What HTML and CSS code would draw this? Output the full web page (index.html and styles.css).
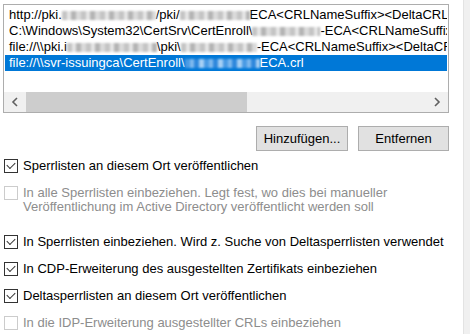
FILE: index.html
```html
<!DOCTYPE html>
<html lang="de">
<head>
    <meta charset="UTF-8">
    <title>Erweiterungen</title>
    <link rel="stylesheet" href="styles.css">
</head>
<body>
    <div class="page">
        <div class="content">
            <!-- Liste der Sperrlisten-Verteilungspunkte -->
            <div class="listbox">
                <ul class="items">
                    <li>http://pki.<span class="mosaic w94"></span>/pki/<span class="mosaic w70"></span>ECA&lt;CRLNameSuffix&gt;&lt;DeltaCRLAllowed&gt;.crl</li>
                    <li>C:\Windows\System32\CertSrv\CertEnroll\<span class="mosaic w68"></span>-ECA&lt;CRLNameSuffix&gt;&lt;DeltaCRLAllowed&gt;.crl</li>
                    <li>file://\\pki.i<span class="mosaic w90"></span>\pki\<span class="mosaic w76"></span>-ECA&lt;CRLNameSuffix&gt;&lt;DeltaCRLAllowed&gt;.crl</li>
                    <li class="selected">file://\\svr-issuingca\CertEnroll\<span class="mosaic w75"></span>ECA.crl</li>
                </ul>
                <div class="hscroll">
                    <span class="arrow">
                        <svg width="8" height="10" viewBox="0 0 8 10"><path d="M6 1 L2 5 L6 9" fill="none" stroke="#606060" stroke-width="1.6"/></svg>
                    </span>
                    <div class="track"><div class="thumb"></div></div>
                    <span class="arrow">
                        <svg width="8" height="10" viewBox="0 0 8 10"><path d="M2 1 L6 5 L2 9" fill="none" stroke="#606060" stroke-width="1.6"/></svg>
                    </span>
                </div>
            </div>

            <div class="buttons">
                <button class="btn btn-add">Hinzufügen...</button>
                <button class="btn btn-remove">Entfernen</button>
            </div>

            <!-- Optionen -->
            <div class="options">
                <label class="opt">
                    <span class="box checked"></span>
                    <span class="text">Sperrlisten an diesem Ort veröffentlichen</span>
                </label>
                <label class="opt disabled two-lines">
                    <span class="box"></span>
                    <span class="text">In alle Sperrlisten einbeziehen. Legt fest, wo dies bei manueller<br>Veröffentlichung im Active Directory veröffentlicht werden soll</span>
                </label>
                <label class="opt">
                    <span class="box checked"></span>
                    <span class="text">In Sperrlisten einbeziehen. Wird z. Suche von Deltasperrlisten verwendet</span>
                </label>
                <label class="opt">
                    <span class="box checked"></span>
                    <span class="text">In CDP-Erweiterung des ausgestellten Zertifikats einbeziehen</span>
                </label>
                <label class="opt">
                    <span class="box checked"></span>
                    <span class="text">Deltasperrlisten an diesem Ort veröffentlichen</span>
                </label>
                <label class="opt disabled">
                    <span class="box"></span>
                    <span class="text">In die IDP-Erweiterung ausgestellter CRLs einbeziehen</span>
                </label>
            </div>
        </div>
        <div class="side"></div>
    </div>
</body>
</html>
```
FILE: styles.css
```css
body {
    margin: 0;
    font-family: "Liberation Sans", Arial, sans-serif;
    font-size: 13px;
    color: #000;
    background: #fff;
    overflow: hidden;
}

.page {
    display: flex;
    height: 334px;
}

.content {
    width: 446px;
    padding: 4px 0 0 3px;
}

.side {
    margin-left: 14px;
    flex: 1;
    background: #f0f0f0;
    border-left: 1px solid #e3e3e3;
}

/* Listenfeld */
.listbox {
    border: 1px solid #adadad;
    height: 107px;
    display: flex;
    flex-direction: column;
    overflow: hidden;
}

.items {
    list-style: none;
    margin: 0;
    padding: 2px 1px 0 1px;
    flex: 1;
}

.items li {
    height: 16px;
    line-height: 16px;
    padding-left: 4px;
    white-space: nowrap;
    overflow: hidden;
}

.items li.selected {
    background: #0078d7;
    color: #fff;
}

/* verpixelte (unkenntlich gemachte) Stellen */
.mosaic {
    display: inline-block;
    height: 9px;
    margin-top: 4px;
    vertical-align: top;
    background:
        repeating-linear-gradient(90deg, #c4c4c4 0 5px, #e6e6e6 5px 9px, #b4b4b4 9px 14px, #dadada 14px 19px),
        #d0d0d0;
    filter: blur(0.8px);
}

.selected .mosaic {
    background:
        repeating-linear-gradient(90deg, #4a9be4 0 5px, #7fb9ee 5px 9px, #2f88dc 9px 14px, #a6cff4 14px 19px),
        #5aa3e6;
}

.w68 { width: 68px; }
.w70 { width: 70px; }
.w75 { width: 75px; }
.w76 { width: 76px; }
.w90 { width: 90px; }
.w94 { width: 94px; }

.hscroll {
    height: 20px;
    display: flex;
    align-items: center;
    background: #f0f0f0;
}

.arrow {
    width: 22px;
    height: 20px;
    display: flex;
    align-items: center;
    justify-content: center;
}

.track {
    flex: 1;
    height: 20px;
}

.thumb {
    width: 221px;
    height: 20px;
    background: #cdcdcd;
}

/* Schaltflächen */
.buttons {
    display: flex;
    justify-content: flex-end;
    gap: 10px;
    margin-top: 13px;
}

.btn {
    height: 25px;
    background: #e1e1e1;
    border: 1px solid #adadad;
    font-family: inherit;
    font-size: 13px;
    color: #000;
    padding: 0;
}

.btn-add {
    width: 92px;
}

.btn-remove {
    width: 91px;
}

/* Kontrollkästchen */
.options {
    margin-top: 8px;
}

.opt {
    display: flex;
    align-items: flex-start;
    gap: 5px;
    padding-left: 1px;
    line-height: 14px;
    margin-bottom: 13px;
}

.opt.two-lines {
    margin-bottom: 21px;
}

.box {
    width: 12px;
    height: 12px;
    border: 1px solid #333;
    background: #fff;
    position: relative;
    flex: none;
}

.box.checked::after {
    content: "";
    position: absolute;
    left: 2px;
    top: 1px;
    width: 7px;
    height: 4px;
    border-left: 1.5px solid #333;
    border-bottom: 1.5px solid #333;
    transform: translate(0, 1px) rotate(-45deg);
    transform-origin: center;
}

.opt.disabled .box {
    border-color: #cccccc;
}

.opt.disabled .text {
    color: #8d8d8d;
}
```
